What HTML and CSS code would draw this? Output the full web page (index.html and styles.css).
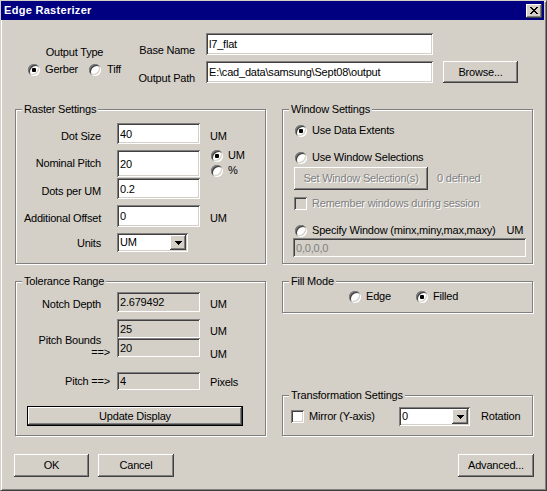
FILE: index.html
```html
<!DOCTYPE html>
<html lang="en">
  <head>
    <meta charset="UTF-8" />
    <title>Edge Rasterizer</title>
    <link rel="stylesheet" href="styles.css">
  </head>

  <body>
    <div class="window">
      <div class="titlebar">
        <span class="title">Edge Rasterizer</span>
        <button class="close_btn">
          <svg width="8" height="7" viewBox="0 0 8 7" shape-rendering="crispEdges">
            <path d="M0 0h2v1h1v1h2v-1h1v-1h2v1h-1v1h-1v1h-1v1h1v1h1v1h1v1h-2v-1h-1v-1h-2v1h-1v1h-2v-1h1v-1h1v-1h1v-1h-1v-1h-1v-1h-1z" fill="#000"/>
          </svg>
        </button>
      </div>

      <div class="dialog">
        <div class="top">
          <div class="output_type">
            <div>Output Type</div>
            <div class="output_type_opts">
              <label class="opt"><span class="radio on"></span>Gerber</label>
              <label class="opt opt_tiff"><span class="radio"></span>Tiff</label>
            </div>
          </div>
          <div class="paths">
            <span class="path_lbl">Base Name</span>
            <input class="field" type="text" value="l7_flat" />
            <span></span>
            <span class="path_lbl">Output Path</span>
            <input class="field" type="text" value="E:\cad_data\samsung\Sept08\output" />
            <button class="btn">Browse...</button>
          </div>
        </div>

        <div class="columns">
          <div class="col">
            <fieldset class="group raster">
              <legend>Raster Settings</legend>
              <div class="raster_body">
                <div class="row">
                  <span class="lbl">Dot Size</span>
                  <input class="field" type="text" value="40" />
                  <span class="unit">UM</span>
                </div>
                <div class="row tall">
                  <span class="lbl">Nominal Pitch</span>
                  <input class="field" type="text" value="20" />
                  <div class="unit_opts">
                    <label class="opt"><span class="radio on"></span>UM</label>
                    <label class="opt"><span class="radio"></span>%</label>
                  </div>
                </div>
                <div class="row">
                  <span class="lbl">Dots per UM</span>
                  <input class="field" type="text" value="0.2" />
                  <span></span>
                </div>
                <div class="row tall">
                  <span class="lbl">Additional Offset</span>
                  <input class="field" type="text" value="0" />
                  <span class="unit">UM</span>
                </div>
                <div class="row short">
                  <span class="lbl">Units</span>
                  <div class="combo units_combo">
                    <span class="combo_value">UM</span>
                    <span class="combo_btn">
                      <svg width="7" height="4" viewBox="0 0 7 4" shape-rendering="crispEdges"><path d="M0 0h7v1h-1v1h-1v1h-1v1h-1v-1h-1v-1h-1v-1h-1z" fill="#000"/></svg>
                    </span>
                  </div>
                  <span></span>
                </div>
              </div>
            </fieldset>

            <fieldset class="group tolerance">
              <legend>Tolerance Range</legend>
              <div class="tolerance_body">
                <div class="row notch">
                  <span class="lbl">Notch Depth</span>
                  <input class="field ro" type="text" value="2.679492" readonly />
                  <span class="unit">UM</span>
                </div>
                <div class="row bounds">
                  <span class="lbl bounds_lbl">Pitch Bounds<span class="arrow">==&gt;</span></span>
                  <div class="bounds_fields">
                    <input class="field ro" type="text" value="25" readonly />
                    <input class="field ro" type="text" value="20" readonly />
                  </div>
                  <div class="bounds_units">
                    <span>UM</span>
                    <span>UM</span>
                  </div>
                </div>
                <div class="row pitch">
                  <span class="lbl"><span class="arrow">Pitch ==&gt;</span></span>
                  <input class="field ro" type="text" value="4" readonly />
                  <span class="unit">Pixels</span>
                </div>
                <button class="btn default update_btn">Update Display</button>
              </div>
            </fieldset>
          </div>

          <div class="col">
            <fieldset class="group window_set">
              <legend>Window Settings</legend>
              <div class="window_body">
                <label class="opt wrow"><span class="radio on"></span>Use Data Extents</label>
                <label class="opt wrow second"><span class="radio"></span>Use Window Selections</label>
                <div class="sel_row">
                  <button class="btn sel_btn dim" disabled>Set Window Selection(s)</button>
                  <span class="dim defined">0 defined</span>
                </div>
                <label class="opt check_row dim"><span class="check off"></span>Remember windows during session</label>
                <label class="opt wrow third"><span class="radio"></span>Specify Window (minx,miny,max,maxy)<span class="um_tail">UM</span></label>
                <input class="field ro bounds_input" type="text" value="0,0,0,0" disabled />
              </div>
            </fieldset>

            <fieldset class="group fill">
              <legend>Fill Mode</legend>
              <div class="fill_body">
                <label class="opt"><span class="radio"></span>Edge</label>
                <label class="opt"><span class="radio on"></span>Filled</label>
              </div>
            </fieldset>

            <fieldset class="group transform">
              <legend>Transformation Settings</legend>
              <div class="transform_body">
                <label class="opt mirror"><span class="check"></span>Mirror (Y-axis)</label>
                <div class="combo">
                  <span class="combo_value">0</span>
                  <span class="combo_btn">
                    <svg width="7" height="4" viewBox="0 0 7 4" shape-rendering="crispEdges"><path d="M0 0h7v1h-1v1h-1v1h-1v1h-1v-1h-1v-1h-1v-1h-1z" fill="#000"/></svg>
                  </span>
                </div>
                <span class="rotation">Rotation</span>
              </div>
            </fieldset>
          </div>
        </div>

        <div class="actions">
          <button class="btn ok_btn">OK</button>
          <button class="btn cancel_btn">Cancel</button>
          <button class="btn advanced_btn">Advanced...</button>
        </div>
      </div>
    </div>
  </body>
</html>
```

FILE: styles.css
```css
* {
  box-sizing: border-box;
}

body {
  margin: 0;
  background: #d4d0c8;
  color: #000;
  font: 11px/13px "Liberation Sans", Arial, sans-serif;
  letter-spacing: -0.2px;
}

.window {
  width: 547px;
  height: 491px;
  background: #d4d0c8;
  border: 1px solid;
  border-color: #d4d0c8 #404040 #404040 #d4d0c8;
  box-shadow: inset 1px 1px #fff, inset -1px -1px #808080;
}

/* title bar */
.titlebar {
  display: flex;
  align-items: center;
  justify-content: space-between;
  height: 19px;
  margin-right: 2px;
  padding: 0 2px 0 3px;
  background: #000080;
  color: #fff;
  font-weight: bold;
  letter-spacing: 0.3px;
}

.close_btn {
  display: flex;
  align-items: center;
  justify-content: center;
  width: 16px;
  height: 14px;
  padding: 0;
  border: 0;
  background: #d4d0c8;
  box-shadow: inset -1px -1px #404040, inset 1px 1px #fff, inset -2px -2px #808080, inset 2px 2px #d4d0c8;
}

/* common controls */
.field {
  width: 100%;
  height: 100%;
  margin: 0;
  padding: 0 3px;
  border: 0;
  outline: none;
  background: #fff;
  color: #000;
  font: inherit;
  letter-spacing: inherit;
  box-shadow: inset 1px 1px #808080, inset -1px -1px #fff, inset 2px 2px #404040, inset -2px -2px #d4d0c8;
}

.field.ro {
  background: #d4d0c8;
}

.field:disabled {
  color: #808080;
  opacity: 1;
}

.btn {
  padding: 0;
  border: 0;
  background: #d4d0c8;
  color: #000;
  font: inherit;
  letter-spacing: inherit;
  box-shadow: inset -1px -1px #404040, inset 1px 1px #fff, inset -2px -2px #808080, inset 2px 2px #d4d0c8;
}

.btn.default {
  border: 1px solid #000;
}

.dim,
.btn.dim {
  color: #808080;
  text-shadow: 1px 1px #fff;
}

.opt {
  display: flex;
  align-items: center;
  gap: 5px;
  height: 13px;
  white-space: nowrap;
}

.radio {
  display: flex;
  flex: none;
  align-items: center;
  justify-content: center;
  width: 12px;
  height: 12px;
  border-radius: 50%;
  background: #fff;
  box-shadow: inset 1px 1px #808080, inset -1px -1px #fff, inset 2px 2px #404040, inset -2px -2px #d4d0c8;
}

.radio.on::after {
  content: "";
  width: 4px;
  height: 4px;
  border-radius: 1px;
  background: #000;
}

.check {
  flex: none;
  width: 13px;
  height: 13px;
  background: #fff;
  box-shadow: inset 1px 1px #808080, inset -1px -1px #fff, inset 2px 2px #404040, inset -2px -2px #d4d0c8;
}

.check.off {
  background: #d4d0c8;
}

.combo {
  display: flex;
  width: 71px;
  padding: 2px;
  background: #fff;
  box-shadow: inset 1px 1px #808080, inset -1px -1px #fff, inset 2px 2px #404040, inset -2px -2px #d4d0c8;
}

.combo_value {
  flex: 1;
  padding-left: 1px;
  align-self: center;
}

.combo_btn {
  display: flex;
  align-items: center;
  justify-content: center;
  width: 16px;
  background: #d4d0c8;
  box-shadow: inset -1px -1px #404040, inset 1px 1px #fff, inset -2px -2px #808080, inset 2px 2px #d4d0c8;
}

/* layout */
.dialog {
  padding: 13px 0 0 14px;
}

.top {
  display: flex;
  height: 50px;
}

.output_type {
  width: 119px;
  padding-top: 13px;
  text-align: center;
}

.output_type_opts {
  display: flex;
  justify-content: center;
  margin-top: 4px;
}

.opt_tiff {
  margin-left: 11px;
  gap: 6px;
}

.paths {
  display: grid;
  grid-template-columns: 62px 227px 75px;
  grid-template-rows: 22px 22px;
  column-gap: 10px;
  row-gap: 6px;
}

.path_lbl {
  padding: 11px 1px 0 0;
  text-align: right;
  white-space: nowrap;
}

.columns {
  display: grid;
  grid-template-columns: 251px 251px;
  column-gap: 16px;
  height: 333px;
  margin-top: 20px;
}

.col {
  display: flex;
  flex-direction: column;
}

/* group boxes */
.group {
  margin: 0;
  padding: 0;
  min-width: 0;
  border: 1px solid #808080;
  box-shadow: inset 1px 1px #fff, 1px 1px #fff;
}

.group legend {
  margin-left: 6px;
  padding: 0 2px;
  line-height: 13px;
  background: #d4d0c8;
}

.raster,
.window_set {
  height: 161px;
}

.tolerance {
  height: 161px;
  margin-top: 11px;
}

.fill {
  height: 38px;
  margin-top: 11px;
}

.transform {
  height: 47px;
  margin-top: auto;
}

/* raster / tolerance rows */
.row {
  display: grid;
  grid-template-columns: 85px 83px auto;
  column-gap: 16px;
  height: 21px;
}

.row + .row {
  margin-top: 6px;
}

.row.tall {
  height: 22px;
}

.row.short {
  height: 19px;
}

.lbl {
  padding-top: 7px;
  text-align: right;
  white-space: nowrap;
}

.row.short .lbl {
  padding-top: 4px;
}

.unit {
  margin-left: -6px;
  padding-top: 7px;
}

.unit_opts {
  display: flex;
  flex-direction: column;
  gap: 2px;
  margin: -1px 0 0 -5px;
}

.raster_body {
  padding-top: 7px;
}

.tolerance_body {
  padding-top: 4px;
}

.row.notch {
  height: 20px;
}

.row.notch .lbl,
.row.notch .unit {
  padding-top: 6px;
}

.row.bounds {
  height: 38px;
  margin-top: 7px;
}

.bounds_lbl {
  display: flex;
  flex-direction: column;
  align-items: flex-end;
  padding-top: 15px;
  line-height: 12px;
}

.arrow {
  margin-right: -9px;
}

.bounds_fields {
  display: grid;
  grid-template-rows: 19px 19px;
}

.bounds_units {
  display: flex;
  flex-direction: column;
  gap: 10px;
  margin-left: -6px;
  padding-top: 6px;
}

.row.pitch {
  height: 18px;
  margin-top: 15px;
}

.row.pitch .lbl {
  padding-top: 3px;
}

.row.pitch .unit {
  padding-top: 4px;
}

.update_btn {
  width: 216px;
  height: 20px;
  margin: 16px 0 0 11px;
}

/* window settings */
.window_body {
  display: flex;
  flex-direction: column;
  align-items: flex-start;
  padding: 8px 0 0 11px;
}

.wrow {
  padding-left: 1px;
}

.wrow.second,
.wrow.third {
  margin-top: 14px;
}

.sel_row {
  display: flex;
  align-items: center;
  margin-top: 3px;
}

.sel_btn {
  width: 134px;
  height: 23px;
}

.defined {
  margin-left: 9px;
}

.check_row {
  margin-top: 7px;
}

.um_tail {
  margin-left: 6px;
}

.bounds_input {
  width: 233px;
  height: 19px;
  margin: 1px 0 0 -1px;
}

/* fill mode */
.fill_body {
  display: grid;
  grid-template-columns: 67px auto;
  padding: 2px 0 0 66px;
}

/* transformation */
.transform_body {
  display: grid;
  grid-template-columns: 108px 71px auto;
  height: 24px;
  padding: 5px 0 0 8px;
}

.mirror {
  align-self: center;
}

.rotation {
  align-self: center;
  margin-left: 11px;
}

/* bottom buttons */
.actions {
  display: flex;
  gap: 9px;
  margin: 18px 0 0 -1px;
  padding-right: 12px;
}

.actions .btn {
  width: 76px;
  height: 23px;
}

.actions .ok_btn {
  width: 75px;
}

.actions .advanced_btn {
  margin-left: auto;
}
```
